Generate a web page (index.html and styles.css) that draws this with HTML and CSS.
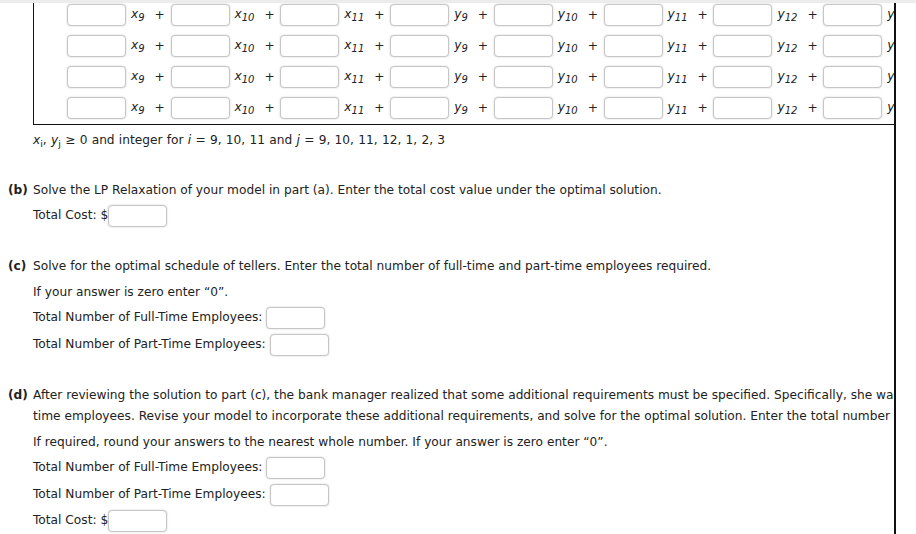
FILE: index.html
```html
<!DOCTYPE html>
<html lang="en">
<head>
<meta charset="utf-8">
<title>LP Model</title>
<link rel="stylesheet" href="styles.css">
</head>
<body>
<div class="topbar"></div>
<div class="frame">
  <div class="model">
    <div class="row">
      <input class="box" type="text"><span class="var">x<sub>9</sub></span><span class="op">+</span>
      <input class="box" type="text"><span class="var">x<sub>10</sub></span><span class="op">+</span>
      <input class="box" type="text"><span class="var">x<sub>11</sub></span><span class="op">+</span>
      <input class="box" type="text"><span class="var">y<sub>9</sub></span><span class="op">+</span>
      <input class="box" type="text"><span class="var">y<sub>10</sub></span><span class="op">+</span>
      <input class="box" type="text"><span class="var">y<sub>11</sub></span><span class="op">+</span>
      <input class="box" type="text"><span class="var">y<sub>12</sub></span><span class="op">+</span>
      <input class="box" type="text"><span class="var">y<sub>1</sub></span>
    </div>
    <div class="row">
      <input class="box" type="text"><span class="var">x<sub>9</sub></span><span class="op">+</span>
      <input class="box" type="text"><span class="var">x<sub>10</sub></span><span class="op">+</span>
      <input class="box" type="text"><span class="var">x<sub>11</sub></span><span class="op">+</span>
      <input class="box" type="text"><span class="var">y<sub>9</sub></span><span class="op">+</span>
      <input class="box" type="text"><span class="var">y<sub>10</sub></span><span class="op">+</span>
      <input class="box" type="text"><span class="var">y<sub>11</sub></span><span class="op">+</span>
      <input class="box" type="text"><span class="var">y<sub>12</sub></span><span class="op">+</span>
      <input class="box" type="text"><span class="var">y<sub>1</sub></span>
    </div>
    <div class="row">
      <input class="box" type="text"><span class="var">x<sub>9</sub></span><span class="op">+</span>
      <input class="box" type="text"><span class="var">x<sub>10</sub></span><span class="op">+</span>
      <input class="box" type="text"><span class="var">x<sub>11</sub></span><span class="op">+</span>
      <input class="box" type="text"><span class="var">y<sub>9</sub></span><span class="op">+</span>
      <input class="box" type="text"><span class="var">y<sub>10</sub></span><span class="op">+</span>
      <input class="box" type="text"><span class="var">y<sub>11</sub></span><span class="op">+</span>
      <input class="box" type="text"><span class="var">y<sub>12</sub></span><span class="op">+</span>
      <input class="box" type="text"><span class="var">y<sub>1</sub></span>
    </div>
    <div class="row">
      <input class="box" type="text"><span class="var">x<sub>9</sub></span><span class="op">+</span>
      <input class="box" type="text"><span class="var">x<sub>10</sub></span><span class="op">+</span>
      <input class="box" type="text"><span class="var">x<sub>11</sub></span><span class="op">+</span>
      <input class="box" type="text"><span class="var">y<sub>9</sub></span><span class="op">+</span>
      <input class="box" type="text"><span class="var">y<sub>10</sub></span><span class="op">+</span>
      <input class="box" type="text"><span class="var">y<sub>11</sub></span><span class="op">+</span>
      <input class="box" type="text"><span class="var">y<sub>12</sub></span><span class="op">+</span>
      <input class="box" type="text"><span class="var">y<sub>1</sub></span>
    </div>
  </div>

  <p class="cond"><span class="v">x</span><sub class="isub">i</sub>, <span class="v">y</span><sub class="isub">j</sub> ≥ 0 and integer for <i>i</i> = 9, 10, 11 and <i>j</i> = 9, 10, 11, 12, 1, 2, 3</p>

  <section class="part part-b">
    <div class="line"><span class="lbl">(b)</span>Solve the LP Relaxation of your model in part (a). Enter the total cost value under the optimal solution.</div>
    <div class="line">Total Cost: $<input class="box" type="text"></div>
  </section>

  <section class="part part-c">
    <div class="line"><span class="lbl">(c)</span>Solve for the optimal schedule of tellers. Enter the total number of full-time and part-time employees required.</div>
    <div class="line">If your answer is zero enter “0”.</div>
    <div class="line">Total Number of Full-Time Employees: <input class="box" type="text"></div>
    <div class="line">Total Number of Part-Time Employees: <input class="box" type="text"></div>
  </section>

  <section class="part part-d">
    <div class="line"><span class="lbl">(d)</span>After reviewing the solution to part (c), the bank manager realized that some additional requirements must be specified. Specifically, she wants<br>time employees. Revise your model to incorporate these additional requirements, and solve for the optimal solution. Enter the total number of</div>
    <div class="line">If required, round your answers to the nearest whole number. If your answer is zero enter “0”.</div>
    <div class="line">Total Number of Full-Time Employees: <input class="box" type="text"></div>
    <div class="line">Total Number of Part-Time Employees: <input class="box" type="text"></div>
    <div class="line">Total Cost: $<input class="box" type="text"></div>
  </section>
</div>
</body>
</html>
```

FILE: styles.css
```css
html, body {
  margin: 0;
  padding: 0;
  background: #fff;
}

body {
  font-family: "DejaVu Sans", Verdana, sans-serif;
  font-size: 12.2px;
  color: #222;
  width: 916px;
  height: 534px;
  overflow: hidden;
}

.topbar {
  height: 3px;
  background: #ececec;
}

.frame {
  box-sizing: border-box;
  width: 896px;
  height: 531px;
  padding-left: 33px;
  border-right: 2px solid #111;
  overflow: hidden;
}

.model {
  width: max-content;
  padding: 1px 0 5px 33px;
  border-left: 1px solid #111;
  border-bottom: 1px solid #111;
  display: flex;
  flex-direction: column;
  gap: 9px;
}

.row {
  display: flex;
  align-items: center;
  height: 22px;
  white-space: nowrap;
}

.box {
  box-sizing: border-box;
  width: 59px;
  height: 22px;
  margin: 0;
  padding: 0 3px;
  border: 1px solid #c6c6c6;
  border-radius: 4px;
  box-shadow: 0 0 2px rgba(0, 0, 0, 0.2);
  background: #fff;
  font: inherit;
  vertical-align: top;
}

.row .box {
  flex: none;
}

.var {
  font-style: italic;
  margin-left: 5px;
  line-height: 1;
}

.var sub {
  font-style: italic;
  font-size: 10px;
  vertical-align: -3px;
  line-height: 1;
}

.op {
  margin: 0 5.7px 0 10px;
}

.cond {
  margin: 5px 0 0;
  line-height: 21px;
  white-space: nowrap;
  word-spacing: 0.4px;
}

.v {
  font-style: italic;
}

.isub {
  font-size: 9.5px;
  vertical-align: -3px;
  line-height: 1;
}

.part {
  display: flex;
  flex-direction: column;
  gap: 4.5px;
}

.part-b {
  margin-top: 28.5px;
}

.part-c {
  margin-top: 29px;
}

.part-d {
  margin-top: 29.5px;
}

.line {
  line-height: 21px;
  white-space: nowrap;
}

.lbl {
  display: inline-block;
  width: 25px;
  margin-left: -25px;
  font-weight: bold;
}
```
